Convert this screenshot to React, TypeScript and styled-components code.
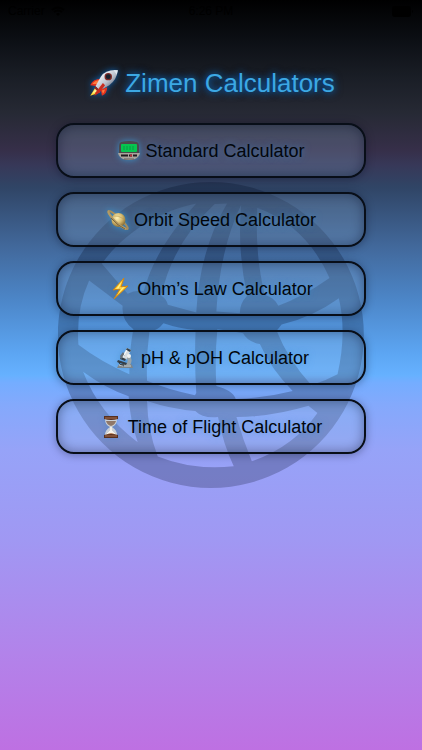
import React from "react";
import styled, { createGlobalStyle } from "styled-components";

const GlobalStyle = createGlobalStyle`
  *, *::before, *::after { box-sizing: border-box; }
  body { margin: 0; background: #be70e2; }
`;

const Screen = styled.div`
  position: relative;
  min-height: 100vh;
  display: flex;
  flex-direction: column;
  overflow: hidden;
  font-family: "Liberation Sans", Helvetica, Arial, sans-serif;
  color: #000;
  background: linear-gradient(
    #000 0%, #0b0e13 5%, #191d25 10%, #262934 15%, #362f49 20%, #373858 22%,
    #304566 25%, #42699c 33%, #4c86c8 40%, #5ca5f2 47%, #66b1ff 50%,
    #74adff 51%, #84a9fc 54%, #96a3f8 60%, #a098f3 72%, #b283ea 87%, #be70e2 100%
  );
`;

const StatusBar = styled.header`
  display: grid;
  grid-template-columns: 1fr auto 1fr;
  align-items: center;
  height: 22px;
  padding: 0 8px;
  font-size: 12px;
  line-height: 22px;
`;

const StatusGroup = styled.span<{ $end?: boolean }>`
  display: flex;
  align-items: center;
  justify-content: ${(p) => (p.$end ? "flex-end" : "flex-start")};
  gap: 6px;
`;

const Content = styled.main`
  position: relative;
  display: flex;
  flex-direction: column;
  padding: 41px 56px 40px;
`;

const Title = styled.h1`
  display: flex;
  align-items: center;
  justify-content: center;
  gap: 4px;
  margin: 0 0 20px;
  font-size: 26px;
  line-height: 40px;
  font-weight: 400;
  white-space: nowrap;
  color: #3ca8e4;
  text-shadow: 0 0 6px #0a60b0, 0 0 10px rgba(10, 96, 176, 0.7);
`;

const Menu = styled.nav`
  display: flex;
  flex-direction: column;
  gap: 14px;
`;

const MenuButton = styled.button`
  display: flex;
  align-items: center;
  justify-content: center;
  gap: 4px;
  height: 55px;
  padding: 0 12px;
  border: 2px solid #080e18;
  border-radius: 18px;
  background: rgba(150, 185, 225, 0.22);
  box-shadow: inset 0 0 12px rgba(0, 8, 30, 0.4), 0 1px 8px rgba(0, 8, 30, 0.35);
  color: #02060c;
  font: inherit;
  font-size: 18px;
  line-height: 24px;
  white-space: nowrap;
  text-shadow: 0 0 7px rgba(60, 150, 215, 0.6);
  cursor: pointer;
`;

const Icon = styled.svg<{ $size: number; $glow?: string }>`
  flex: none;
  width: ${(p) => p.$size}px;
  height: ${(p) => p.$size}px;
  filter: drop-shadow(0 0 3px ${(p) => p.$glow ?? "rgba(50, 165, 230, 0.75)"});
`;

const GlobeSvg = styled.svg`
  position: absolute;
  top: 182px;
  left: 50%;
  width: 306px;
  height: 306px;
  transform: translateX(-50%);
  pointer-events: none;
`;

const Globe = () => (
  <GlobeSvg viewBox="27 18 914 914" aria-hidden="true">
    <path
      fill="rgba(0,8,30,0.23)"
      fillRule="evenodd"
      d="M484 18A457 457 0 1 1 483 18Z
      M158 262C220 175 325 105 440 82C370 160 312 240 283 344Q258 340 235 352Z
      M120 312L220 388Q216 430 252 458Q240 520 240 592Q155 555 88 504Q80 400 120 312Z
      M102 585Q170 635 238 658Q242 730 265 795Q150 710 102 585Z
      M293 672Q360 695 437 702Q460 725 505 720Q520 800 552 867Q430 880 325 838Q295 760 293 672Z
      M560 720Q670 718 775 686L802 708Q730 810 606 852Q580 790 560 720Z
      M503 458Q545 462 580 470Q592 495 630 502Q665 580 728 642Q650 662 558 666Q550 640 500 627Q495 540 503 458Z
      M342 440Q385 455 438 460Q434 550 440 648L436 655Q360 640 293 612Q290 540 300 465Q325 462 342 440Z
      M695 444Q790 420 866 365Q890 470 862 592Q825 612 784 625Q715 550 680 462Z
      M622 95Q770 150 838 305Q760 360 685 388Q675 365 645 355Q615 240 622 95Z
      M574 86Q562 220 592 358Q570 380 570 410L500 405Q510 220 574 86Z
      M495 84L532 82Q450 220 440 408L355 385Q350 365 335 358Q370 200 495 84Z"
    />
  </GlobeSvg>
);

const Rocket = () => (
  <Icon $size={34} $glow="#0a60b0" viewBox="0 0 32 32" aria-hidden="true">
    <defs>
      <linearGradient id="hull" x1="0" y1="0" x2="1" y2="1">
        <stop offset="0.2" stopColor="#f4f6fa" />
        <stop offset="0.55" stopColor="#b9bfcb" />
        <stop offset="0.85" stopColor="#565d6e" />
      </linearGradient>
    </defs>
    <path d="M8 20L3 28L12 25Z" fill="#ffd52e" />
    <path d="M8 21L5 26L11 23Z" fill="#fff19a" />
    <path d="M13 12Q6 12 3 18L10 19ZM19 20Q19 26 14 28L13 22Z" fill="#e3321e" />
    <path d="M12 13Q7 14 5 17L10 17ZM17 22Q16 25 15 26L14 23Z" fill="#ff7a3c" />
    <path d="M29 4Q18 3 13 10L8 19L12 23L21 18Q28 13 29 4Z" fill="url(#hull)" />
    <path d="M8 19L12 23L10 24L7 21Z" fill="#93271e" />
    <path d="M15 16L8 25L7 28L12 25L17 18Z" fill="#c92c20" />
    <circle cx="20" cy="10" r="3.5" fill="#7d2a28" />
    <circle cx="20" cy="10" r="2.3" fill="#17202d" />
    <path d="M25 4L29 4L28 8Z" fill="#dfe8f1" />
  </Icon>
);

const Pager = () => (
  <Icon $size={24} viewBox="0 0 24 24" aria-hidden="true">
    <path d="M4 3Q12 1 20 3Q22 4 22 7V15Q20 21 12 21T2 15V7Q2 4 4 3Z" fill="#4c4a4c" />
    <path d="M1 14H23Q22 18 18 20Q12 22 6 20Q2 18 1 14Z" fill="#aaa49d" />
    <rect x="4" y="5" width="16" height="8" rx="1" fill="#07c650" />
    <path d="M6 8H18M6 10H17" stroke="#079c43" strokeWidth="1" strokeDasharray="2 1" />
    <path d="M4 16.5H20" stroke="#201d20" strokeWidth="2" strokeDasharray="7 1 3 1" />
    <path d="M13 16.5H15" stroke="#b22f38" strokeWidth="2" />
    <path d="M7 20H17" stroke="#66615e" strokeWidth="1" />
  </Icon>
);

const Planet = () => (
  <Icon $size={24} viewBox="0 0 24 24" aria-hidden="true">
    <defs>
      <radialGradient id="planet" cx="0.4" cy="0.35" r="0.7">
        <stop offset="0" stopColor="#fff3b8" />
        <stop offset="0.5" stopColor="#d8bd72" />
        <stop offset="1" stopColor="#80652f" />
      </radialGradient>
    </defs>
    <ellipse cx="12" cy="12" rx="13" ry="2.5" transform="rotate(43 12 12)" fill="none" stroke="#a58d5c" strokeWidth="2" />
    <circle cx="12.500" cy="12" r="7" fill="url(#planet)" />
    <path d="M7 8Q12 7 18 11" fill="none" stroke="#b89a54" strokeWidth="1" opacity="0.6" />
    <path d="M3 3Q1 4 7 11Q13 18 20 21" fill="none" stroke="#b39b66" strokeWidth="2" />
    <path d="M5 10Q12 18 19 21" fill="none" stroke="#79633a" strokeWidth="1" />
  </Icon>
);

const Bolt = () => (
  <Icon $size={24} $glow="rgba(40,120,180,0.4)" viewBox="0 0 24 24" aria-hidden="true">
    <path d="M15 1L4 13L11 12L5 22L19 9L12 10Z" fill="#ffc928" stroke="#cf8517" strokeWidth="1" strokeLinejoin="round" />
    <path d="M13 4L7 12L13 11L9 17L16 10L10 11Z" fill="#fff08a" />
  </Icon>
);

const Microscope = () => (
  <Icon $size={24} $glow="rgba(40,120,180,0.4)" viewBox="0 0 24 24" aria-hidden="true">
    <path d="M5 20Q5 18 9 18H18Q20 20 20 22H4Z" fill="#7d868c" />
    <path d="M15 9Q21 13 17 19H12Q17 15 13 12Z" fill="#99a4aa" />
    <path d="M5 14L14 17L13 19L4 16Z" fill="#343f48" />
    <path d="M14 2L18 4L13 14L8 12Z" fill="#d8dee1" />
    <path d="M14 2L18 4L17 6L13 4ZM8 11L13 13L12 15L7 13Z" fill="#34404a" />
    <path d="M10 6L7 10L8 13L12 9Z" fill="#657079" />
    <path d="M14 4L10 11" stroke="#fff" strokeWidth="1" />
    <circle cx="16" cy="10" r="2" fill="#f0f2f2" />
    <path d="M6 19L10 20M11 20H18" stroke="#c7ced0" strokeWidth="1" />
    <path d="M6 16Q6 19 11 19" fill="none" stroke="#232d35" strokeWidth="1" />
  </Icon>
);

const Hourglass = () => (
  <Icon $size={24} $glow="rgba(40,120,180,0.3)" viewBox="0 0 24 24" aria-hidden="true">
    <path d="M5 4H17Q17 10 12 12Q17 15 17 20H5Q5 15 10 12Q5 10 5 4Z" fill="#cbd0d6" />
    <path d="M6 6H16Q15 10 11 11Q7 10 6 6Z" fill="#8f7768" />
    <path d="M11 12V15L16 20H6L11 15Z" fill="#f8f4eb" stroke="#f8f4eb" />
    <path d="M6 20Q9 18 11 18T16 20Z" fill="#b98058" />
    <path d="M4 1H18V4Q11 6 4 4ZM4 20Q11 18 18 20V23H4Z" fill="#57301f" />
    <path d="M5 3H17M5 21H17" stroke="#ab7152" strokeWidth="1" />
  </Icon>
);

const calculators = [
  { label: "Standard Calculator", Glyph: Pager },
  { label: "Orbit Speed Calculator", Glyph: Planet },
  { label: "Ohm’s Law Calculator", Glyph: Bolt },
  { label: "pH & pOH Calculator", Glyph: Microscope },
  { label: "Time of Flight Calculator", Glyph: Hourglass },
];

export default function App() {
  return (
    <>
      <GlobalStyle />
      <Screen>
        <Globe />
        <StatusBar>
          <StatusGroup>
            Carrier
            <svg width="14" height="11" viewBox="0 0 14 11" aria-hidden="true">
              <path d="M1 4Q7 -1 13 4M3 6Q7 3 11 6" fill="none" stroke="#000" strokeWidth="2" />
              <path d="M5 8Q7 6 9 8L7 10Z" />
            </svg>
          </StatusGroup>
          <span>6:26 PM</span>
          <StatusGroup $end>
            <svg width="22" height="11" viewBox="0 0 22 11" aria-hidden="true">
              <rect width="19" height="11" rx="3" />
              <path d="M20 4Q22 5 20 7Z" />
            </svg>
          </StatusGroup>
        </StatusBar>
        <Content>
          <Title>
            <Rocket />
            Zimen Calculators
          </Title>
          <Menu aria-label="Calculators">
            {calculators.map(({ label, Glyph }) => (
              <MenuButton key={label} type="button">
                <Glyph />
                {label}
              </MenuButton>
            ))}
          </Menu>
        </Content>
      </Screen>
    </>
  );
}
